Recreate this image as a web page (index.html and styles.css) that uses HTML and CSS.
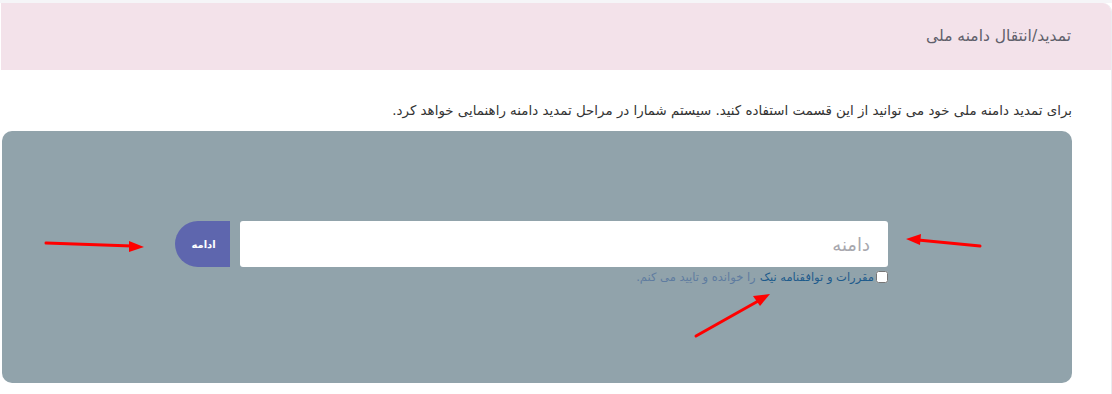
FILE: index.html
```html
<!DOCTYPE html>
<html lang="fa" dir="rtl">
<head>
<meta charset="utf-8">
<link rel="stylesheet" href="styles.css">
</head>
<body>
<div class="page">
  <div class="card">
    <div class="card-header">تمدید/انتقال دامنه ملی</div>
    <div class="card-body">
      <p class="intro">برای تمدید دامنه ملی خود می توانید از این قسمت استفاده کنید. سیستم شمارا در مراحل تمدید دامنه راهنمایی خواهد کرد.</p>
      <div class="panel">
        <div class="form">
          <div class="row">
            <input class="domain" type="text" placeholder="دامنه">
            <button class="go">ادامه</button>
          </div>
          <label class="agree"><input type="checkbox" class="check"><a class="link">مقررات و توافقنامه نیک</a> را خوانده و تایید می کنم.</label>
        </div>
      </div>
    </div>
  </div>
  <svg class="arrows" width="1112" height="394" viewBox="0 0 1112 394">
    <g stroke="#ff0000" stroke-width="3" stroke-linecap="round">
      <line x1="46" y1="243" x2="132" y2="246"/>
      <line x1="980" y1="246" x2="918" y2="240"/>
      <line x1="696" y1="336" x2="760" y2="300"/>
    </g>
    <g fill="#ff0000">
      <polygon points="144,247 129,241 129,252"/>
      <polygon points="906,239 921,234 920,245"/>
      <polygon points="770,294 753,296 760,306"/>
    </g>
  </svg>
</div>
</body>
</html>
```
FILE: styles.css
```css
* { box-sizing: border-box; }
html, body { margin: 0; padding: 0; background: #ffffff; }
body { font-family: "DejaVu Sans", "Noto Sans", sans-serif; }
.page { position: relative; width: 1112px; height: 394px; padding-top: 3px; background: linear-gradient(#f5f5f8 0 3px, #ffffff 3px); overflow: hidden; }
.card { width: 1111px; height: 391px; background: #ffffff; border-right: 1px solid #ebebf0; border-top-right-radius: 9px; overflow: hidden; }
.card-header { height: 67px; background: #f3e2ea; color: #5f5f6a; font-size: 15.5px; display: flex; align-items: center; padding: 0 40px 2px 0; }
.card-body { padding: 0 39px 0 0; }
.intro { margin: 0; padding: 32px 0 0 0; height: 61px; font-size: 13.4px; color: #333; line-height: 18px; }
.panel { margin-left: 1px; height: 252px; background: #91a3ab; border-radius: 10px; padding: 90px 184px 0 0; }
.form { display: flex; flex-direction: column; align-items: flex-start; width: 713px; }
.row { display: flex; gap: 10px; height: 46px; }
.domain { width: 648px; height: 46px; border: none; border-radius: 3px; background: #fff; font-family: inherit; font-size: 18px; padding: 0 18px; outline: none; }
.domain::placeholder { color: #a8a8ae; }
.go { width: 55px; height: 46px; border: none; background: #5e66ae; color: #fff; font-family: inherit; font-size: 10px; font-weight: bold; border-radius: 23px 0 0 23px; padding: 0 0 0 2px; }
.agree { display: flex; align-items: center; margin-top: 3px; font-size: 11.5px; color: #5f7ca0; line-height: 14px; }
.check { width: 12px; height: 12px; margin: 0 0 0 2px; }
.link { color: #1e5b8c; margin-left: 4px; }
.arrows { position: absolute; left: 0; top: 0; pointer-events: none; }
```
